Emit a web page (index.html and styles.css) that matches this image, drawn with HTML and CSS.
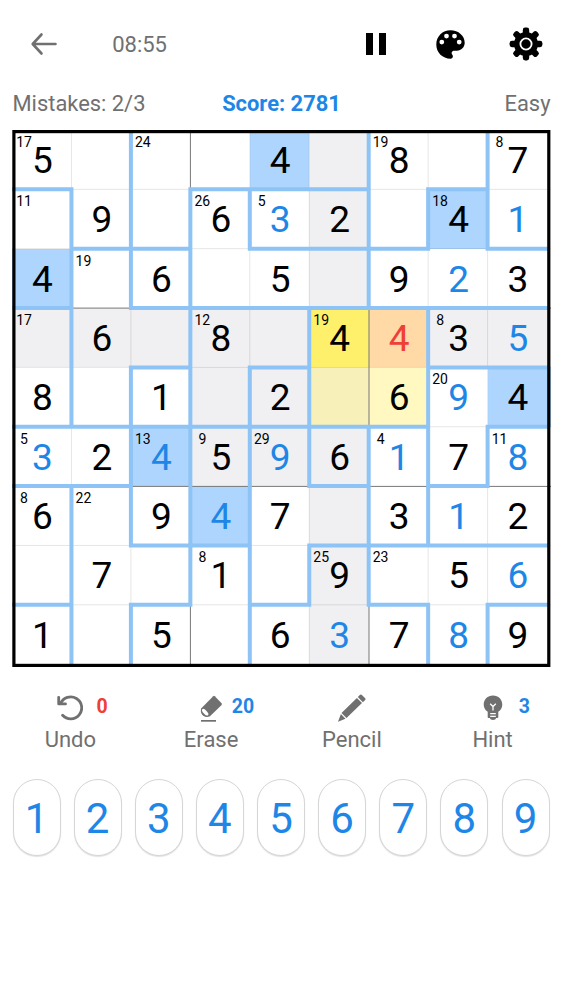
FILE: index.html
```html
<!DOCTYPE html>
<html lang="en">
<head>
<meta charset="utf-8">
<meta name="viewport" content="width=device-width, initial-scale=1">
<title>Killer Sudoku</title>
<link rel="stylesheet" href="styles.css">
</head>
<body>
<main class="app">
  <header class="topbar">
    <svg class="back" width="28" height="24" viewBox="0 0 28 24"><path d="M25.500 12H3M11.500 2.500L2.700 12 11.500 21.500"/></svg>
    <span class="time">08:55</span>
    <nav class="tools">
      <svg width="20" height="22" viewBox="0 0 20 22"><path d="M0 0h7v22H0zM13 0h7v22h-7z"/></svg>
      <svg width="29" height="29" viewBox="0 0 29 29"><path fill-rule="evenodd" d="M14.5.3C6.600.3.300 6.400.300 14.500S6.600 28.700 14.500 28.700c1.400 0 2.400-1.100 2.400-2.400 0-.6-.2-1.200-.6-1.600-1.400-1.700-.3-4 1.800-4h2.800c4.400 0 7.800-3.500 7.800-7.900C28.700 5.800 22.400.3 14.500.3zM5.800 9.700a2.400 2.400 0 1 1 0 4.800 2.400 2.400 0 0 1 0-4.800zM10.500 3.700a2.400 2.400 0 1 1 0 4.800 2.400 2.400 0 0 1 0-4.800zM18.500 3.700a2.400 2.400 0 1 1 0 4.800 2.400 2.400 0 0 1 0-4.800zM23.200 9.700a2.400 2.400 0 1 1 0 4.800 2.400 2.400 0 0 1 0-4.800z"/></svg>
      <svg width="34" height="34" viewBox="-17 -17 34 34">
        <g id="teeth"><rect x="-3.200" y="-16.400" width="6.400" height="32.800" rx="2.400"/><rect x="-16.400" y="-3.200" width="32.800" height="6.400" rx="2.400"/></g>
        <use href="#teeth" transform="rotate(45)"/>
        <circle r="12"/><circle r="5.600" fill="none" stroke="#fff" stroke-width="1.800"/>
      </svg>
    </nav>
  </header>
  <section class="status">
    <span>Mistakes: 2/3</span>
    <strong class="score">Score: 2781</strong>
    <span class="level">Easy</span>
  </section>
  <section class="board" id="board">
    <svg class="lines" width="539" height="537" viewBox="0 0 539 537">
      <path class="thin" id="thin"/>
      <path class="box" d="M178.400 0V537M357 0V537M0 178.100H539M0 356.400H539"/>
      <path class="cage" id="cage"/>
      <rect class="frame" x="1.900" y="1.600" width="534.900" height="533.800"/>
    </svg>
  </section>
  <section class="actions">
    <div class="action">
      <div class="icon-row">
        <svg class="undo" width="26" height="26" viewBox="0 0 26 26"><path class="stroke" d="M3.600 8.500A11 11 0 1 1 5.600 20.300"/><path class="stroke" d="M1.700 2.300V8.900H8.500"/></svg>
        <b class="count red">0</b>
      </div>
      <span>Undo</span>
    </div>
    <div class="action">
      <div class="icon-row">
        <svg class="erase" width="23" height="27" viewBox="0 0 23 27"><path d="M13.200 1.200Q14 .4 14.800 1.200L21.600 8.300Q22.300 9.100 21.600 9.900L10 21.300Q6.500 23 3.200 20.700Q.1 18 1.100 13.400Z"/><ellipse cx="5.200" cy="17.200" rx="1.800" ry="4.200" transform="rotate(-43 5.200 17.200)" fill="#fff"/><path d="M1 25h15v1.700H1z"/></svg>
        <b class="count">20</b>
      </div>
      <span>Erase</span>
    </div>
    <div class="action">
      <div class="icon-row">
        <svg class="pencil" width="28" height="28" viewBox="0 0 28 28"><path d="M19.800 3.100L22.100.8Q23 .1 23.900.9L27.200 4.200Q28 5 27.200 5.900L24.900 8.200ZM18.900 4L24 9.100 8.500 24.100 3.500 19.100ZM2.900 20L7.500 24.800 0 27.700Z"/></svg>
      </div>
      <span>Pencil</span>
    </div>
    <div class="action">
      <div class="icon-row">
        <svg class="hint" width="20" height="26" viewBox="0 0 20 26"><path d="M10 .5C4.600.5.700 4.400.700 9.500c0 3.300 1.600 5.700 4 7.300v5.500q0 .8.900.8h1.200q.4 2 3.200 2t3.200-2h1.200q.9 0 .9-.8v-5.500c2.400-1.600 4-4 4-7.300C19.300 4.400 15.400.5 10 .5z"/><path class="cut" d="M7.200 8.800L10 11.500 12.800 8.800M10 11.500V15.500M7.200 18.700h5.600M7.200 21.400h5.600"/></svg>
        <b class="count">3</b>
      </div>
      <span>Hint</span>
    </div>
  </section>
  <section class="keys" id="keys"></section>
</main>
<script src="board.js"></script>
</body>
</html>
```
FILE: styles.css
```css
* { box-sizing: border-box; }
body {
  margin: 0;
  background: #fff;
  font-family: Roboto, sans-serif;
  color: #707070;
}
.app {
  width: 563px;
  height: 1000px;
  overflow: hidden;
  padding: 0 12px;
}
.topbar {
  display: flex;
  align-items: center;
  height: 88px;
  padding-left: 17.500px;
}
.back { fill: none; stroke: #707070; stroke-width: 2.6; stroke-linecap: round; stroke-linejoin: round; }
.time { margin-left: 54.700px; font-size: 22px; line-height: 26px; padding-top: 2px; }
.tools {
  display: flex;
  align-items: center;
  gap: 50px;
  margin-left: auto;
  padding-right: 8.500px;
}
.tools svg { display: block; }
.tools svg:nth-child(3) { margin-left: -6px; }
.status {
  display: grid;
  grid-template-columns: 1fr auto 1fr;
  height: 42px;
  padding: 0 .5px;
  font-size: 21.900px;
  line-height: 31px;
}
.score { color: #1e86e6; font-weight: 700; }
.level { text-align: right; }
.board {
  position: relative;
  display: grid;
  grid-template-columns: repeat(8, 59.450px) 1fr;
  grid-template-rows: repeat(8, 59.350px) 1fr;
  width: 539px;
  height: 537px;
}
.cell {
  position: relative;
  padding-top: 1px;
  padding-left: 1.600px;
  color: #000;
  font-size: 37px;
  line-height: 59px;
  text-align: center;
}
.cell:nth-child(9n) { padding-right: 4.500px; }
.cell.mate { background: #f0eff1; }
.cell.same { background: #add5fd; }
.cell.selected { background: #fff06c; }
.cell.zone { background: #f8f0b9; }
.cell.zone-light { background: #fff8c0; }
.cell.error { background: #ffd9a6; color: #ee4036; }
.cell.entered { color: #1e86e6; }
.sum {
  position: absolute;
  top: 4px;
  left: 2px;
  width: 20px;
  color: #000;
  font-size: 14px;
  line-height: 16px;
}
.lines { position: absolute; left: 0; top: 0; fill: none; }
.thin { stroke: #000; stroke-opacity: .1; stroke-width: 1; }
.box { stroke: #777; stroke-width: 1; }
.cage { stroke: #8dc3f5; stroke-width: 4; stroke-linecap: square; }
.frame { stroke: #000; stroke-width: 3.200; }
.actions {
  display: grid;
  grid-template-columns: repeat(4, 140.750px);
  margin: 25px -12px 0;
  font-size: 22px;
  line-height: 28px;
  text-align: center;
}
.icon-row {
  position: relative;
  display: flex;
  justify-content: center;
  align-items: center;
  height: 32px;
  margin-bottom: 2px;
  fill: #707070;
}
.stroke { fill: none; stroke: #707070; stroke-width: 2.800; stroke-linejoin: round; stroke-linecap: round; }
.cut { fill: none; stroke: #fff; stroke-width: 1.300; }
.count {
  position: absolute;
  left: 91px;
  top: 1px;
  min-width: 22px;
  color: #1e86e6;
  font-size: 19.500px;
  line-height: 28px;
}
.red { color: #ee4036; }
.keys {
  display: flex;
  justify-content: space-between;
  margin: 25px 1.500px 0 .5px;
}
.key {
  width: 48px;
  height: 77px;
  padding: 0;
  border: 1px solid #d6d6d6;
  border-radius: 24px;
  background: #fff;
  box-shadow: 0 1px 1px rgba(0, 0, 0, .12);
  color: #1e86e6;
  font: 42px/77px Roboto, sans-serif;
  text-align: center;
}
```
FILE: board.js
```js
const digits = [
  "5...4.8.7", ".9.632.41", "4.6.5.923", ".6.8.4435", "8.1.2.694",
  "324596178", "6.947.312", ".7.1.9.56", "1.5.63789"
];
// g: row/column/box mate, b: same digit, y/z/l: selected cage, e: conflict
const shades = [
  "....bg...", ".....g.b.", "b....g...", "gggggyegg", "...ggzl.b",
  "..bggg...", "...b.g...", ".....g...", ".....g..."
];
const entered = [
  ".........", "....x...x", ".......x.", "........x", ".......x.",
  "x.x.x.x.x", "...x...x.", "........x", ".....x.x."
];
const sums = {
  "00": 17, "02": 24, "06": 19, "08": 8, "10": 11, "13": 26, "14": 5, "17": 18,
  "21": 19, "30": 17, "33": 12, "35": 19, "37": 8, "47": 20, "50": 5, "52": 13,
  "53": 9, "54": 29, "56": 4, "58": 11, "60": 8, "61": 22, "73": 8, "75": 25, "76": 23
};
const names = { g: "mate", b: "same", y: "selected", z: "zone", l: "zone-light", e: "error" };

const board = document.getElementById("board");
const lines = board.querySelector(".lines");
for (let r = 0; r < 9; r++) {
  for (let c = 0; c < 9; c++) {
    const cell = document.createElement("div");
    cell.className = "cell";
    if (names[shades[r][c]]) cell.classList.add(names[shades[r][c]]);
    if (entered[r][c] === "x") cell.classList.add("entered");
    if (digits[r][c] !== ".") cell.textContent = digits[r][c];
    if (sums["" + r + c]) {
      const sum = document.createElement("span");
      sum.className = "sum";
      sum.textContent = sums["" + r + c];
      cell.append(sum);
    }
    board.insertBefore(cell, lines);
  }
}

// Cage walls: one string per inner grid line, one character per cell along it.
const vertical = [
  ".xxxx.xxx", "xxx.xxx.x", ".xxxxxxx.", ".x..xxxxx",
  "...xxx.x.", "xxx..xxx.", ".x.xxxx.x", "xx...x..x"
];
const horizontal = [
  "x..xxx.x.", ".xx.xxx.x", "x.xxxxxxx", "..x.x..xx",
  "xxxxxxx.x", "xx...x.x.", "..xx.xxxx", "x.x.x.x.x"
];
const X = k => k === 9 ? 536 : k * 59.45;
const Y = k => k === 9 ? 535 : k * 59.35;
let cage = "", thin = "";
for (let k = 1; k < 9; k++) {
  if (k % 3) thin += `M${X(k)} 0V537M0 ${Y(k)}H539`;
  for (let i = 0; i < 9; i++) {
    if (vertical[k - 1][i] === "x") cage += `M${X(k)} ${Y(i)}V${Y(i + 1)}`;
    if (horizontal[k - 1][i] === "x") cage += `M${X(i)} ${Y(k)}H${X(i + 1)}`;
  }
}
document.getElementById("cage").setAttribute("d", cage);
document.getElementById("thin").setAttribute("d", thin);

const keys = document.getElementById("keys");
for (let n = 1; n <= 9; n++) {
  const key = document.createElement("button");
  key.className = "key";
  key.textContent = n;
  keys.append(key);
}
```
